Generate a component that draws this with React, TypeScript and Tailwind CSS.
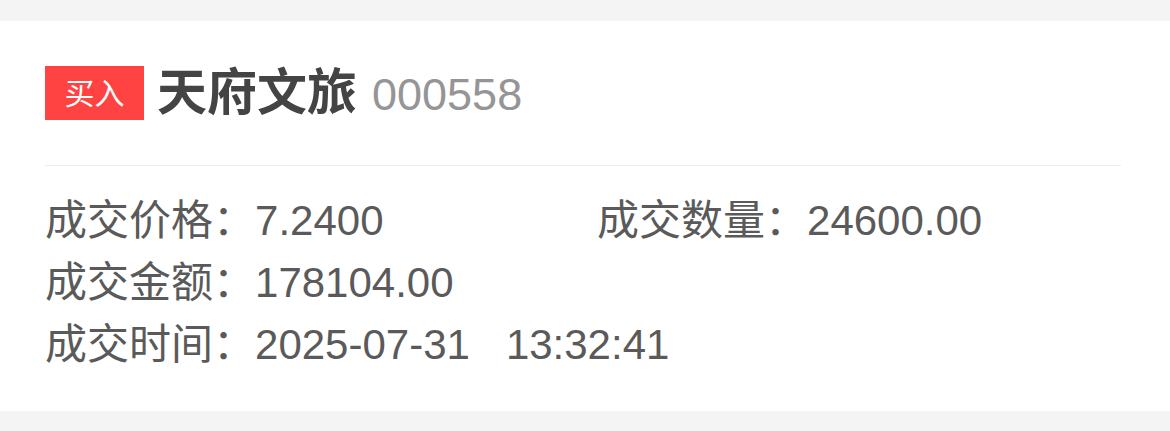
const FONT = "font-['Liberation_Sans','Noto_Sans_CJK_SC',sans-serif]";

function Field({ label, value }: { label: string; value: React.ReactNode }) {
  return (
    <div className="flex whitespace-nowrap">
      <span>{label}：</span>
      <span>{value}</span>
    </div>
  );
}

export default function App() {
  return (
    <div className={`min-h-[431px] bg-[#f4f4f4] pt-[21px] pb-[21px] ${FONT}`}>
      <div className="bg-white pl-[45px] pr-[49px] pb-[35px]">
        {/* Header */}
        <div className="flex items-center py-[45px]">
          <div className="w-[99px] h-[54px] bg-[#ff4343] text-white text-[30px] flex items-center justify-center">
            买入
          </div>
          <div className="flex items-baseline ml-[13px]">
            <span className="text-[50px] font-bold text-[#444] leading-none">天府文旅</span>
            <span className="ml-[15px] text-[45px] text-[#959595] leading-none">000558</span>
          </div>
        </div>

        <div className="h-px bg-[#ececec]" />

        {/* Details */}
        <div className="pt-[24px] text-[42px] leading-[62px] text-[#5a5a5a]">
          <div className="flex">
            <div className="w-[552px]">
              <Field label="成交价格" value="7.2400" />
            </div>
            <Field label="成交数量" value="24600.00" />
          </div>
          <Field label="成交金额" value="178104.00" />
          <Field
            label="成交时间"
            value={
              <>
                2025-07-31<span className="ml-[36px]">13:32:41</span>
              </>
            }
          />
        </div>
      </div>
    </div>
  );
}
